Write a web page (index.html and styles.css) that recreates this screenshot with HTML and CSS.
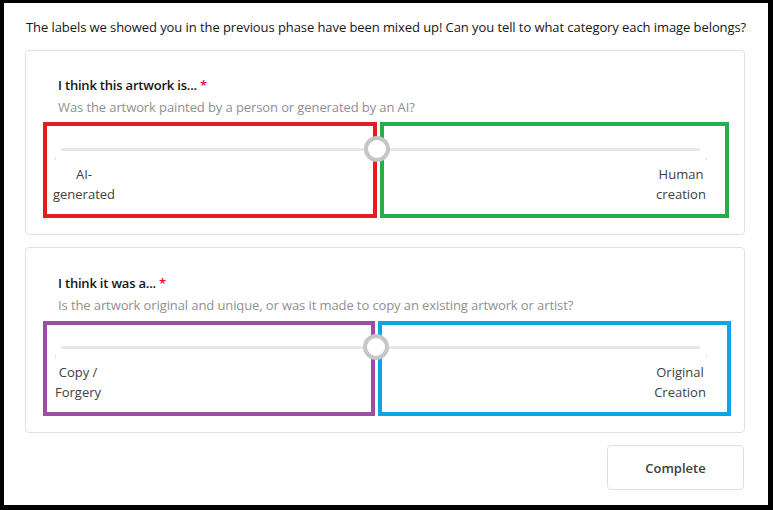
FILE: index.html
```html
<!DOCTYPE html>
<html lang="en">
<head>
<meta charset="utf-8">
<title>Survey</title>
<link rel="stylesheet" href="styles.css">
</head>
<body>
<div class="frame">
  <p class="intro">The labels we showed you in the previous phase have been mixed up! Can you tell to what category each image belongs?</p>

  <section class="card">
    <h3 class="title">I think this artwork is... <span class="req">*</span></h3>
    <p class="desc">Was the artwork painted by a person or generated by an AI?</p>
    <div class="slider slider-a">
      <div class="zone zone-red">
        <div class="label label-left-a">AI-<br>generated</div>
      </div>
      <div class="zone zone-green">
        <div class="label label-right-a">Human<br>creation</div>
      </div>
      <div class="track"></div>
      <div class="thumb thumb-a"></div>
    </div>
  </section>

  <section class="card card-b">
    <h3 class="title">I think it was a... <span class="req">*</span></h3>
    <p class="desc">Is the artwork original and unique, or was it made to copy an existing artwork or artist?</p>
    <div class="slider slider-b">
      <div class="zone zone-purple">
        <div class="label label-left-b">Copy /<br>Forgery</div>
      </div>
      <div class="zone zone-blue">
        <div class="label label-right-b">Original<br>Creation</div>
      </div>
      <div class="track"></div>
      <div class="thumb thumb-b"></div>
    </div>
  </section>

  <div class="actions">
    <button class="complete" type="button">Complete</button>
  </div>
</div>
</body>
</html>
```

FILE: styles.css
```css
html, body {
  margin: 0;
  padding: 0;
  background: #000;
}

body {
  font-family: "Open Sans", "Noto Sans", sans-serif;
  font-size: 13px;
  color: #161616;
}

.frame {
  margin: 3px 5px 5px 4px;
  height: 502px;
  background: #fff;
  padding: 0 0 0 21px;
  box-sizing: border-box;
  width: 764px;
}

.intro {
  margin: 0;
  padding: 14px 0 0 1px;
  line-height: 20px;
  height: 33px;
  letter-spacing: -0.08px;
  color: #161616;
}

.card {
  width: 720px;
  box-sizing: border-box;
  border: 1px solid #e2e2e2;
  border-radius: 4px;
  padding: 24px 0 16px 0;
}

.card-b {
  margin-top: 12px;
  padding-top: 25px;
  padding-bottom: 16px;
}

.title {
  margin: 0;
  padding-left: 32px;
  font-size: 13px;
  line-height: 20px;
  font-weight: 600;
  color: #161616;
  letter-spacing: -0.2px;
}

.req {
  color: #e60a3e;
}

.desc {
  margin: 2px 0 0 0;
  padding-left: 32px;
  line-height: 20px;
  color: #909090;
  letter-spacing: -0.1px;
}

.slider {
  position: relative;
  margin: 5px 0 0 17px;
  display: grid;
  grid-template-columns: 334px 349px;
  column-gap: 3px;
  height: 96px;
}

.slider-b {
  margin-top: 6px;
  grid-template-columns: 332px 353px;
  height: 95px;
}

.zone {
  box-sizing: border-box;
  border: 4px solid;
  display: flex;
  align-items: flex-start;
}

.zone-red { border-color: #e41c24; }
.zone-green { border-color: #21b04b; justify-content: flex-end; }
.zone-purple { border-color: #9c4fa2; }
.zone-blue { border-color: #0ba6e3; justify-content: flex-end; }

.label {
  margin-top: 38px;
  line-height: 20px;
  text-align: center;
  color: #404040;
  width: 64px;
}

.slider-b .label { margin-top: 37px; }

.label-left-a { margin-left: 5px; }
.label-right-a { margin-right: 12px; }
.label-left-b { margin-left: 1px; width: 60px; }
.label-right-b { margin-right: 15px; }

.track {
  position: absolute;
  left: 18px;
  width: 639px;
  top: 26px;
  height: 3px;
  background: #e7e7e7;
}

.track::before,
.track::after {
  content: "";
  position: absolute;
  top: 9px;
  width: 1px;
  height: 3px;
  background: #e2e2e2;
}

.track::before { left: -6px; }
.track::after { right: -7px; }

.slider-b .track { top: 25px; }

.thumb {
  position: absolute;
  top: 14px;
  width: 26px;
  height: 26px;
  box-sizing: border-box;
  border: 4px solid #c6c6c6;
  border-radius: 50%;
  background: #fff;
}

.thumb-a { left: 321px; }
.thumb-b { left: 320px; top: 13px; }

.actions {
  display: flex;
  justify-content: flex-end;
  width: 720px;
  margin-top: 12px;
}

.complete {
  width: 137px;
  height: 45px;
  box-sizing: border-box;
  border: 1px solid #e0e0e0;
  border-radius: 4px;
  background: #fff;
  font-family: "Open Sans", "Noto Sans", sans-serif;
  font-size: 13px;
  font-weight: 600;
  color: #404040;
  margin-right: 1px;
}
```
